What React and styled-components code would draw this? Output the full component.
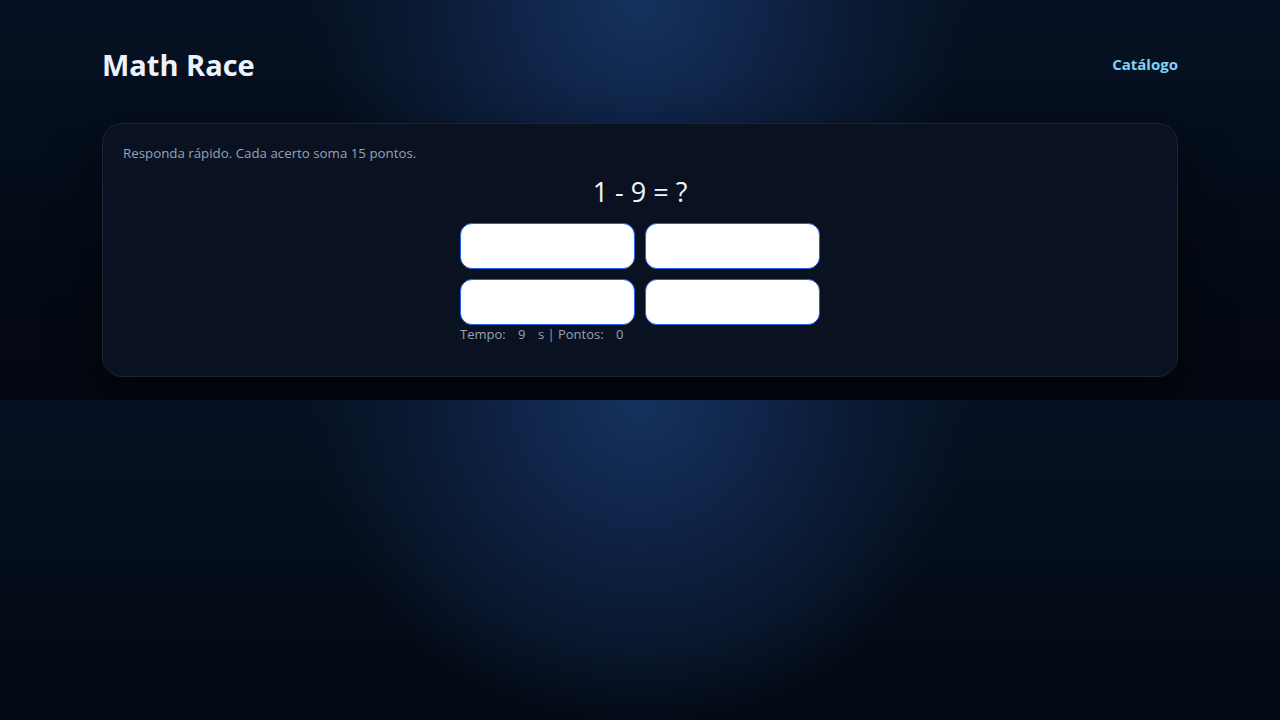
import styled, { createGlobalStyle } from "styled-components";

const GlobalStyle = createGlobalStyle`
    html, body {
        margin: 0;
    }
    body {
        font-family: "Open Sans", "Noto Sans", sans-serif;
        color: #e2e8f0;
        background:
            radial-gradient(circle 330px at 50% 0%, #15325d 0%, #0f2346 40%, #0a1931 70%, rgba(6, 16, 32, 0) 100%),
            linear-gradient(180deg, #061223 0%, #040b17 60%, #030711 100%);
    }
`;

const Page = () => {
    return (
        <Shell>
            <Header>
                <Title>Math Race</Title>
                <NavLink href="#">Catálogo</NavLink>
            </Header>
            <Card>
                <Hint>Responda rápido. Cada acerto soma 15 pontos.</Hint>
                <Question>1 - 9 = ?</Question>
                <Board>
                    <Answers>
                        <Answer />
                        <Answer />
                        <Answer />
                        <Answer />
                    </Answers>
                    <Status>
                        Tempo: <Value>9</Value> s | Pontos: <Value>0</Value>
                    </Status>
                </Board>
            </Card>
        </Shell>
    );
};

const App = () => (
    <>
        <GlobalStyle />
        <Page />
    </>
);

const Shell = styled.div`
    width: 1076px;
    margin: 0 auto;
    padding: 40px 0 23px;
`;

const Header = styled.header`
    display: flex;
    align-items: center;
    justify-content: space-between;
    height: 48px;
    margin-bottom: 35px;
`;

const Title = styled.h1`
    margin: 0;
    font-size: 29px;
    font-weight: 700;
    color: #eef2ff;
`;

const NavLink = styled.a`
    color: #7dd3fc;
    font-size: 15px;
    font-weight: 700;
    text-decoration: none;
`;

const Card = styled.section`
    box-sizing: border-box;
    height: 254px;
    padding: 20px;
    border: 1px solid #1c2336;
    border-radius: 20px;
    background: #0a1121;
    box-shadow: 0 20px 50px rgba(0, 0, 0, 0.55);
`;

const Hint = styled.p`
    margin: 0;
    font-size: 13.3px;
    line-height: 18px;
    color: #94a3b8;
`;

const Question = styled.div`
    margin-top: 13px;
    text-align: center;
    font-size: 27px;
    line-height: 34px;
    color: #f1f5f9;
`;

const Board = styled.div`
    width: 360px;
    margin: 14px auto 0;
`;

const Answers = styled.div`
    display: grid;
    grid-template-columns: 1fr 1fr;
    gap: 10px;
`;

const Answer = styled.button`
    height: 46px;
    border: 1px solid #2563eb;
    border-radius: 12px;
    background: #ffffff;
    cursor: pointer;
`;

const Status = styled.div`
    font-size: 13px;
    line-height: 18px;
    color: #94a3b8;
`;

const Value = styled.span`
    margin: 0 9px;
`;

export default App;
